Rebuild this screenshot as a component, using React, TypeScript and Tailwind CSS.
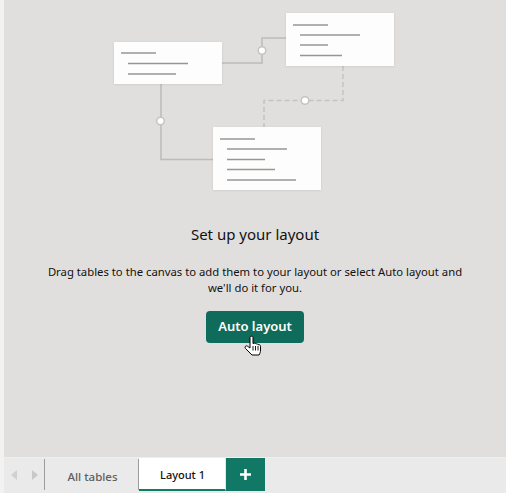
export default function App() {
  const font = { fontFamily: '"Noto Sans", "Open Sans", sans-serif' };
  return (
    <div className="w-[506px] h-[493px] flex bg-[#f3f2f1] overflow-hidden relative" style={font}>
      <div className="w-[4px] shrink-0 bg-[#f3f2f1]" />
      <div className="flex-1 flex flex-col min-w-0">
        <div className="h-[457px] bg-[#e1dfdd] flex flex-col items-center shrink-0">
          <svg width="502" height="200" viewBox="4 0 502 200" className="shrink-0">
            <defs>
              <filter id="s" x="-10%" y="-10%" width="120%" height="120%">
                <feDropShadow dx="0" dy="0.5" stdDeviation="1" floodColor="#000" floodOpacity="0.1" />
              </filter>
            </defs>
            <g fill="none" stroke="#bdbcbb" strokeWidth="1.5">
              <path d="M222 63H262V38H286" />
              <path d="M161 84V159.5H213" />
              <path d="M343 66V100.5H264V127" stroke="#c4c3c2" strokeDasharray="5 3" />
            </g>
            <g fill="#fff" stroke="#c4c3c2" strokeWidth="1.5">
              <circle cx="262" cy="50.5" r="3.8" />
              <circle cx="305" cy="100.5" r="3.8" />
              <circle cx="160.5" cy="121" r="3.8" />
            </g>
            <g fill="#fdfdfd" filter="url(#s)">
              <rect x="114" y="42" width="108" height="42" />
              <rect x="286" y="13" width="108" height="53" />
              <rect x="213" y="127" width="108" height="63" />
            </g>
            <g stroke="#979695" strokeWidth="1.4">
              <path d="M121 53H156M128 63.5H188M128 74H176" />
              <path d="M293 25H328M300 35H360M300 45H328M300 55.500H342" />
              <path d="M220 139H255M227 149H287M227 159.500H265M227 169.500H275M227 180H296" />
            </g>
          </svg>
          <div className="mt-[24px] text-[15px] leading-[20px] text-[#111111]">Set up your layout</div>
          <div className="mt-[20px] w-[430px] text-center text-[11.3px] leading-[16px] text-[#111111]">
            Drag tables to the canvas to add them to your layout or select Auto layout and we'll do it for you.
          </div>
          <button className="mt-[15px] w-[98px] h-[32px] rounded-[4px] bg-[#0f6b5a] text-white text-[13px] font-semibold">
            Auto layout
          </button>
        </div>
        <div className="flex-1 flex bg-[#eaeaea] border-t border-[#eeeeee] pb-[2px] pr-[2px]">
          <div className="w-[41px] flex items-center justify-center gap-[15px] border-r border-[#9b9b9b] my-[1px]">
            <svg width="6" height="10" viewBox="0 0 6 10"><path d="M6 0V10L0 5Z" fill="#d0d0d0" /></svg>
            <svg width="6" height="10" viewBox="0 0 6 10"><path d="M0 0V10L6 5Z" fill="#c8c8c8" /></svg>
          </div>
          <div className="w-[94px] flex items-center justify-center text-[11.500px] font-medium text-[#605e5c] pt-[5px] pl-[2px] border-r border-[#9b9b9b] my-[1px]">All tables</div>
          <div className="w-[87px] bg-white border-r border-[#e6e6e6] border-b-[2px] border-b-[#107c66] flex items-center justify-center text-[11px] font-medium text-[#111111] pt-[4px] pl-[1px]">
            Layout 1
          </div>
          <div className="w-[39px] bg-[#117865] flex items-center justify-center">
            <svg width="11" height="11" viewBox="0 0 11 11"><path d="M5.500 0V11M0 5.500H11" stroke="#fff" strokeWidth="2.600" /></svg>
          </div>
        </div>
      </div>
      <svg width="18" height="21" viewBox="0 0 18 21" className="absolute left-[244px] top-[335px]">
        <path
          d="M6.500 1.500C7.500 .8 9 1.300 9 2.500V8.500L10.500 8.200C11.300 8.100 11.800 8.500 12 9C12.700 8.600 13.700 8.800 14 9.700C15.200 9.300 16.500 10 16.500 11.200V15C16.500 17 16 18.500 15 20H8L1.500 13.500C.2 12 1.800 10 3.500 11.200L6 13V2.500C6 2.100 6.200 1.700 6.500 1.500Z"
          fill="#fff"
          stroke="#000"
          strokeWidth="1"
          strokeLinejoin="round"
        />
        <path d="M9 11V15.500M11.500 11V15.500M14 11V15.500" stroke="#000" strokeWidth=".9" />
      </svg>
    </div>
  );
}
